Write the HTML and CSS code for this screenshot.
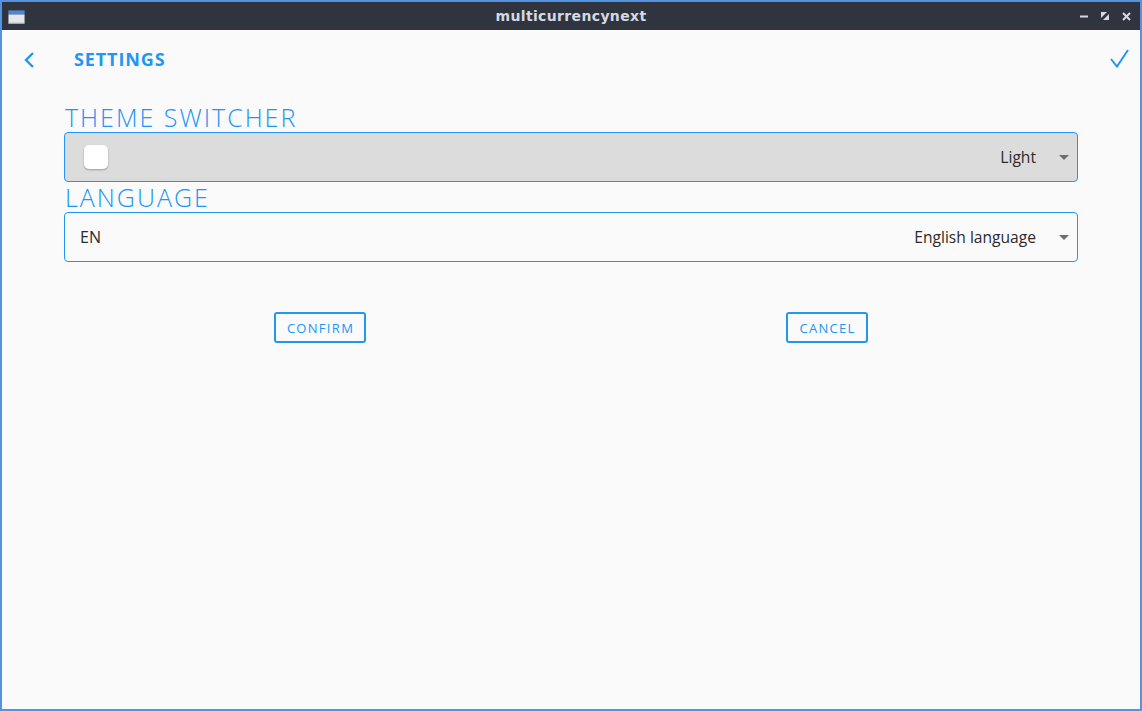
FILE: index.html
```html
<!DOCTYPE html>
<html>
<head>
<meta charset="utf-8">
<link rel="stylesheet" href="styles.css">
</head>
<body>
<div class="window">
  <div class="titlebar">
    <div class="tb-left">
      <svg class="app-icon" width="17" height="14" viewBox="0 0 17 14">
        <rect x="0" y="0" width="17" height="14" fill="#3c4452"/>
        <rect x="0.5" y="0.5" width="16" height="4" fill="#4f86d8"/>
        <rect x="0.5" y="4.5" width="16" height="9" fill="#e4e6ea"/>
        <rect x="0.5" y="12.5" width="16" height="1" fill="#b9bec6"/>
      </svg>
    </div>
    <div class="tb-title">multicurrencynext</div>
    <div class="tb-controls">
      <svg width="9" height="9" viewBox="0 0 9 9"><rect x="0" y="3.5" width="8" height="2" fill="#d3dae3"/></svg>
      <svg width="9" height="9" viewBox="0 0 9 9"><polygon points="0,0 6,0 0,6" fill="#d3dae3"/><polygon points="8,2 8,8 2,8" fill="#d3dae3"/></svg>
      <svg width="9" height="9" viewBox="0 0 9 9"><path d="M1 1 L8 8 M8 1 L1 8" stroke="#d3dae3" stroke-width="2"/></svg>
    </div>
  </div>
  <div class="content">
    <div class="appbar">
      <svg class="back" width="16" height="20" viewBox="0 0 16 20"><polyline points="10,3 3,10 10,17" fill="none" stroke="#2196f3" stroke-width="2.4"/></svg>
      <div class="appbar-title">SETTINGS</div>
      <svg class="check" width="22" height="22" viewBox="0 0 22 22"><polyline points="2,11 8,18.5 19,2" fill="none" stroke="#2196f3" stroke-width="2"/></svg>
    </div>
    <div class="form">
      <div class="label">THEME SWITCHER</div>
      <div class="field field-grey">
        <div class="switch"></div>
        <div class="value">Light</div>
        <span class="arrow"></span>
      </div>
      <div class="label">LANGUAGE</div>
      <div class="field">
        <div class="lead">EN</div>
        <div class="value">English language</div>
        <span class="arrow"></span>
      </div>
      <div class="buttons">
        <div class="btn-cell"><button class="btn">CONFIRM</button></div>
        <div class="btn-cell"><button class="btn">CANCEL</button></div>
      </div>
    </div>
  </div>
</div>
</body>
</html>
```
FILE: styles.css
```css
html, body {
  margin: 0;
  padding: 0;
}
body {
  width: 1142px;
  height: 711px;
  overflow: hidden;
  font-family: "Open Sans", "Noto Sans", sans-serif;
}
.window {
  box-sizing: border-box;
  width: 1142px;
  height: 711px;
  border: 2px solid #5294e2;
  display: flex;
  flex-direction: column;
  background: #fafafa;
}
.titlebar {
  height: 28px;
  background: #2f343f;
  display: grid;
  grid-template-columns: 1fr auto 1fr;
  align-items: center;
}
.tb-left {
  display: flex;
  padding-left: 6px;
  padding-top: 1px;
}
.tb-title {
  font-family: "DejaVu Sans", sans-serif;
  font-weight: bold;
  font-size: 14px;
  letter-spacing: 0.35px;
  color: #d3dae3;
}
.tb-controls {
  display: flex;
  justify-content: flex-end;
  align-items: center;
  gap: 12px;
  padding-right: 9px;
}
.content {
  flex: 1;
  display: flex;
  flex-direction: column;
}
.appbar {
  height: 58px;
  display: flex;
  align-items: center;
  padding: 0 9px 0 21px;
}
.back {
  margin-top: 1px;
}
.appbar-title {
  margin-left: 35px;
  font-weight: 700;
  font-size: 18px;
  letter-spacing: 0.9px;
  color: #2196f3;
  flex: 1;
}
.check {
  margin-top: -1px;
}
.form {
  padding: 15px 62px 0;
  display: flex;
  flex-direction: column;
}
.label {
  font-size: 25px;
  font-weight: 300;
  line-height: 28px;
  letter-spacing: 2px;
  color: #2196f3;
  padding-left: 1px;
  margin-bottom: 1px;
}
.field {
  box-sizing: border-box;
  height: 50px;
  border: 1px solid #2196f3;
  border-radius: 4px;
  display: flex;
  align-items: center;
  padding: 0 8px 0 15px;
  margin-bottom: 1px;
  background: #fafafa;
}
.field-grey {
  background: #dcdcdc;
  padding-left: 19px;
}
.switch {
  width: 24px;
  height: 24px;
  border-radius: 5px;
  background: #ffffff;
  box-shadow: 0 1px 2px rgba(0,0,0,0.3);
}
.lead {
  font-size: 16px;
  color: #2b2b2b;
}
.value {
  flex: 1;
  text-align: right;
  font-size: 15.6px;
  color: #2b2b2b;
  margin-right: 23px;
}
.arrow {
  width: 0;
  height: 0;
  border-left: 5px solid transparent;
  border-right: 5px solid transparent;
  border-top: 5px solid #6e6e6e;
  margin-top: 1px;
}
.buttons {
  display: flex;
  margin-top: 49px;
}
.btn-cell {
  flex: 1;
  display: flex;
  justify-content: center;
  padding-left: 5px;
}
.btn {
  box-sizing: border-box;
  height: 31px;
  border: 2px solid #2196f3;
  border-radius: 3px;
  background: transparent;
  color: #2196f3;
  font-family: "Open Sans", "Noto Sans", sans-serif;
  font-size: 13px;
  font-weight: 500;
  letter-spacing: 1.3px;
  padding: 0 10px 0 11px;
}
```
